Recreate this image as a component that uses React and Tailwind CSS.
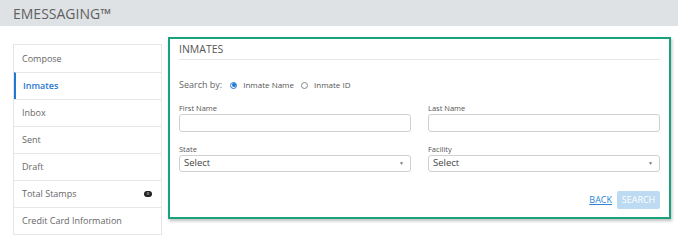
const navItems = [
  { label: 'Compose' },
  { label: 'Inmates', active: true },
  { label: 'Inbox' },
  { label: 'Sent' },
  { label: 'Draft' },
  { label: 'Total Stamps', badge: '0' },
  { label: 'Credit Card Information' },
]

function SelectBox() {
  return (
    <div className="h-[17px] border border-[#d0d0d0] rounded-[3px] flex items-center justify-between pl-[4px] pr-[6px] bg-white">
      <span className="text-[9.5px] text-[#444]">Select</span>
      <span className="text-[5px] text-[#777] leading-none">▼</span>
    </div>
  )
}

export default function App() {
  return (
    <div className="w-[678px] h-[243px] bg-white font-['Open_Sans',sans-serif] overflow-hidden">
      <header className="h-[26px] bg-[#dfe2e5] flex items-center pl-[13px]">
        <span className="text-[14px] text-[#606060]">EMESSAGING™</span>
      </header>

      <div className="flex pl-[13px] pt-[11px] gap-[6px]">
        <nav className="w-[149px] mt-[7px] border border-[#e6e6e6] self-start">
          {navItems.map((item, i) => (
            <div
              key={item.label}
              className={`h-[27px] flex items-center justify-between pr-[9px] text-[9px] ${
                i > 0 ? 'border-t border-[#e6e6e6]' : ''
              } ${
                item.active
                  ? 'border-l-2 border-l-[#1f78d1] pl-[7px] text-[#1f78d1] font-semibold'
                  : 'pl-[8px] text-[#666]'
              }`}
            >
              <span>{item.label}</span>
              {item.badge && (
                <span className="w-[8px] h-[6px] rounded-full bg-[#222] text-white text-[4px] flex items-center justify-center leading-none">
                  {item.badge}
                </span>
              )}
            </div>
          ))}
        </nav>

        <section className="w-[503px] h-[182px] border-2 border-[#1aa27c] shadow-[1px_2px_3px_rgba(0,0,0,0.25)] px-[9px] pt-[2px]">
          <h2 className="text-[10.5px] leading-[16px] text-[#555] pb-[2px] border-b border-[#e8e8e8]">INMATES</h2>

          <div className="flex items-center mt-[19px] h-[12px] text-[8px] text-[#555]">
            <span className="text-[9px] text-[#666] mr-[8px]">Search by:</span>
            <span className="w-[7px] h-[7px] rounded-full border border-[#1f78d1] flex items-center justify-center mr-[6px]">
              <span className="w-[4px] h-[4px] rounded-full bg-[#1f78d1]" />
            </span>
            <span className="mr-[7px]">Inmate Name</span>
            <span className="w-[7px] h-[7px] rounded-full border border-[#888] mr-[6px]" />
            <span>Inmate ID</span>
          </div>

          <div className="grid grid-cols-2 gap-x-[17px] mt-[11px]">
            <div>
              <div className="text-[7.5px] leading-[12px] text-[#555]">First Name</div>
              <div className="h-[18px] border border-[#d0d0d0] rounded-[3px]" />
            </div>
            <div>
              <div className="text-[7.5px] leading-[12px] text-[#555]">Last Name</div>
              <div className="h-[18px] border border-[#d0d0d0] rounded-[3px]" />
            </div>
            <div className="mt-[11px]">
              <div className="text-[7.5px] leading-[12px] text-[#555]">State</div>
              <SelectBox />
            </div>
            <div className="mt-[11px]">
              <div className="text-[7.5px] leading-[12px] text-[#555]">Facility</div>
              <SelectBox />
            </div>
          </div>

          <div className="flex justify-end items-center gap-[5px] mt-[19px]">
            <a className="text-[9px] text-[#2a86d6] underline">BACK</a>
            <button className="h-[18px] w-[43px] rounded-[2px] bg-[#bcdaf1] text-white text-[9px]">SEARCH</button>
          </div>
        </section>
      </div>
    </div>
  )
}
